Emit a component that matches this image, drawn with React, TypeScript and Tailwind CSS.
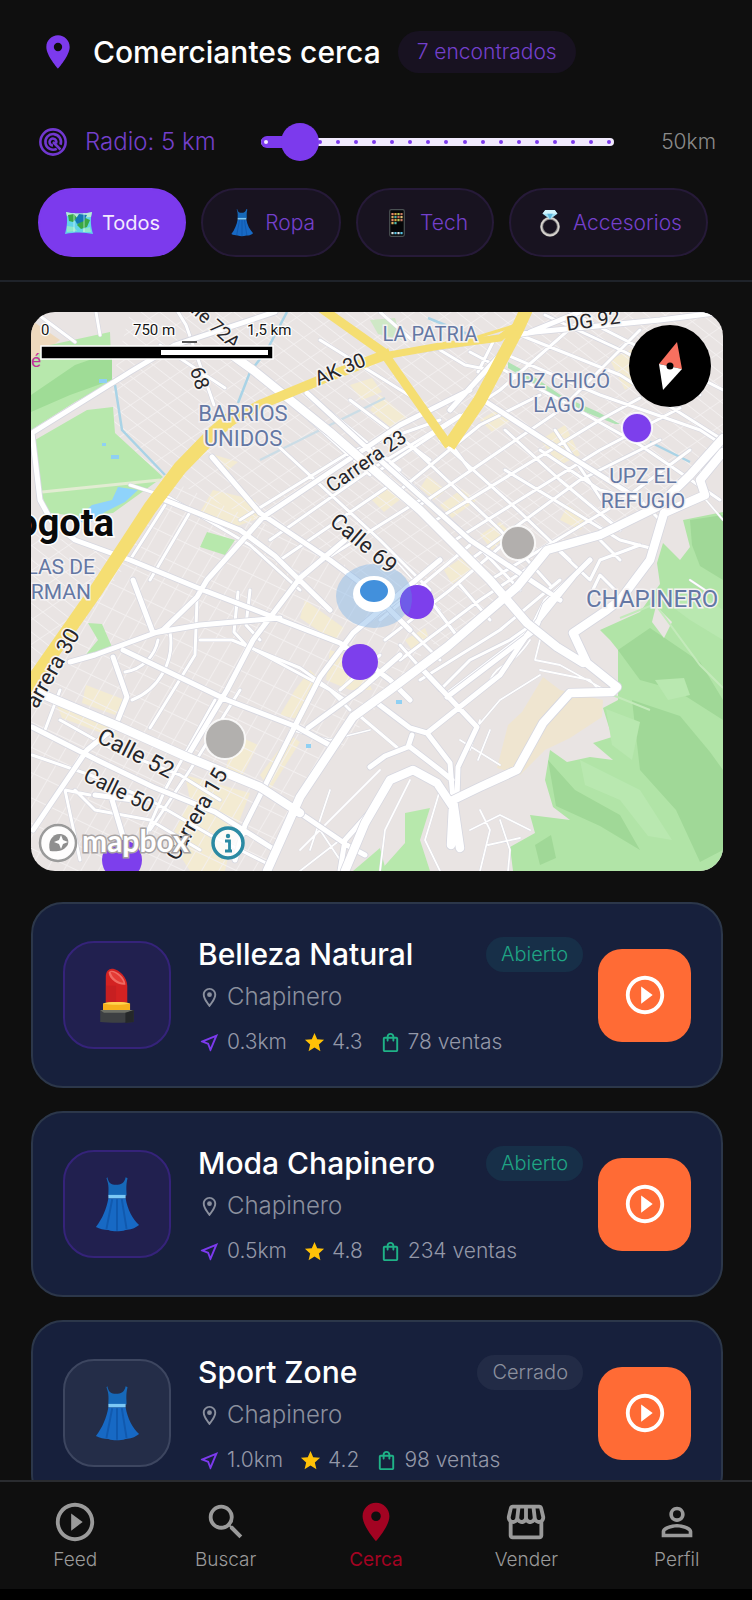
import React, { useState } from "react";
import {
  MdLocationOn,
  MdOutlineLocationOn,
  MdOutlineNearMe,
  MdOutlineShoppingBag,
  MdPersonOutline,
  MdPlayCircleOutline,
  MdSearch,
  MdStar,
  MdOutlineStorefront,
} from "react-icons/md";

/* ---------- Illustrations ---------- */

function Dress({ className }: { className: string }) {
  return (
    <svg viewBox="0 0 48 60" className={className} aria-hidden="true">
      <path d="M14 2c1 6 4 8 9 8s9-2 10-8l2 1c-2 8-1 13-1 18H15c0-6 1-10-2-18z" fill="#1668b8" />
      <path d="M15 24h18c2 12 7 21 14 28-5 4-9 5-14 5-6 2-13 2-18 0-5 0-9-1-13-3C9 45 13 35 15 24z" fill="#1769c4" />
      <path d="M19 25l-6 31M24 25v33M29 25l5 31" stroke="#1159ae" strokeWidth="2" fill="none" />
      <path d="M15 20.500h18v3.500H15z" fill="#7cc8f5" />
    </svg>
  );
}

function Lipstick({ className }: { className: string }) {
  return (
    <svg viewBox="0 0 36 60" className={className} aria-hidden="true">
      <path d="M6 38V10C6 4 10 1 14 2c6 1 15 9 15 18v18z" fill="#d32222" />
      <path d="M6 20v18h11V20z" fill="#b71b20" opacity=".4" />
      <path d="M9 6c3-6 18 3 18 13-6 1-17-4-18-13z" fill="#ef6a62" />
      <path d="M11 5c4 0 12 5 14 12-6-1-12-5-14-12z" fill="#e43b35" />
      <path d="M3 39c8-2 21-2 29 0v9H3z" fill="#f6b01c" />
      <path d="M3 39c8-2 21-2 29 0-8 2-21 2-29 0z" fill="#ffd34e" />
      <path d="M0 46h36v13c-9 1-27 1-36 0z" fill="#3d4043" />
      <path d="M0 46h36l-7 3H4z" fill="#6d6f66" />
      <path d="M27 49l9-3v13l-9 1z" fill="#25282a" />
    </svg>
  );
}

function MapEmoji({ className }: { className: string }) {
  return (
    <svg viewBox="0 0 30 26" className={className} aria-hidden="true">
      <path d="M2 2c9 2 17 2 26 0-2 8-1 15 1 22-9-2-18-2-28 0C3 17 4 9 2 2z" fill="#63d3ea" />
      <path d="M2 2c9 2 17 2 26 0l-1 5c-8 1-16 0-24-1z" fill="#b7ead5" />
      <path d="M4 5l6-1 3 4-4 4-4-1zM13 15l6-8 7 3-3 7-6 2z" fill="#3aa845" />
      <path d="M15 4l8 1-3 6-7 3-2-4z" fill="#1477b5" />
      <path d="M3 16l7 1 3 4-10 1zM19 19l7-2 1 5h-8z" fill="#8ee8c9" />
      <path d="M10 3v19M20 3v19" stroke="#e3fbff" strokeWidth="1" opacity=".6" />
    </svg>
  );
}

function PhoneEmoji({ className }: { className: string }) {
  const colors = ["#e8896a", "#d9a441", "#b8c95a", "#c77b63", "#e0b060", "#4fb8a8", "#d0705a", "#e6c179"];
  return (
    <svg viewBox="0 0 16 28" className={className} aria-hidden="true">
      <rect x=".7" y=".7" width="14.600" height="26.600" rx="1.500" fill="#050608" stroke="#4a5153" strokeWidth="1.200" />
      {Array.from({ length: 14 }, (_, i) => (
        <rect key={i} x={2.4 + (i % 4) * 3} y={4 + Math.floor(i / 4) * 3} width="2.200" height="2.200" rx=".5" fill={colors[i % 8]} />
      ))}
      {[0, 1, 2, 3].map((i) => (
        <rect key={i} x={2.4 + i * 3} y="23" width="2.200" height="2.200" rx=".5" fill={i % 2 ? "#58c6e8" : "#d8e8ea"} />
      ))}
    </svg>
  );
}

function RingEmoji({ className }: { className: string }) {
  return (
    <svg viewBox="0 0 24 30" className={className} aria-hidden="true">
      <circle cx="12" cy="19" r="9" fill="none" stroke="#8b8b8b" strokeWidth="3.200" />
      <circle cx="12" cy="19" r="9.300" fill="none" stroke="#d8d4cf" strokeWidth="1.700" />
      <path d="M7 1h10l3 4-8 6-8-6z" fill="#9fe0f5" />
      <path d="M7 1h10l3 4H4z" fill="#d3f5fd" />
      <path d="M9 5l3 6 3-6z" fill="#5fb7dd" />
    </svg>
  );
}

function Radar({ className }: { className: string }) {
  return (
    <svg viewBox="0 0 28 28" className={className} fill="none" stroke="currentColor" strokeWidth="2.400" aria-hidden="true">
      <circle cx="14" cy="14" r="11.800" />
      <path d="M17.500 20.400A7.300 7.300 0 1 1 21 16.500" />
      <path d="M14 14l7 7M14 17.200a3.200 3.200 0 1 1 3-2.200" />
    </svg>
  );
}

/* ---------- Map ---------- */

const parks = [
  "M31 360L50 345L110 332L112 382L75 402L31 430Z",
  "M35 440L87 410L113 407L115 433L163 477L113 513L80 516L47 513L40 487Z",
  "M207 532L235 540L225 555L200 547Z",
  "M88 623L102 624L112 647L83 658L98 640Z",
  "M405 813L430 808L420 840L430 871L380 871L405 843Z",
  "M353 871L380 848L386 871Z",
];

const forest =
  "M683 520L690 547L680 560L663 543L657 563L660 584L640 612L600 630L610 640L618 650L618 700L603 708L612 737L593 743L613 760L590 757L567 762L550 750L545 780L553 807L570 820L530 815L535 833L510 847L513 871L723 871L723 512Z";

const forestShades = [
  "M690 520L723 515L723 580L700 566L692 545Z",
  "M618 650L650 628L700 662L723 700L723 720L676 690L640 680Z",
  "M632 700L680 716L710 752L723 770L723 850L700 862L676 810L640 770Z",
  "M548 760L575 790L620 815L640 850L600 826L556 806Z",
  "M535 845L551 835L556 858L540 865Z",
];

const forestLights = [
  "M663 600L700 592L723 610L723 640L690 620Z",
  "M606 709L640 722L632 760L612 745Z",
  "M580 760L640 790L672 840L648 836L620 800L585 785Z",
  "M655 680L684 678L690 695L668 700Z",
];

const blocks = [
  "M213 490L255 500L262 517L232 528L200 512Z",
  "M215 455L238 462L228 470Z",
  "M350 385L372 378L382 392L362 400Z",
  "M380 395L410 420L396 432L370 410Z",
  "M440 505L462 489L477 500L452 518Z",
  "M428 476L446 490L434 500L420 488Z",
  "M372 500L392 486L402 498L384 512Z",
  "M305 600L344 628L335 642L300 618Z",
  "M295 690L310 670L320 680L302 720L280 715Z",
  "M330 650L360 660L372 690L350 690L326 680Z",
  "M260 775L290 735L300 742L270 790Z",
  "M185 775L250 793L232 840L225 871L190 871L170 840L190 800Z",
  "M86 685L125 700L115 715L82 703Z",
  "M55 700L110 722L120 740L62 718Z",
  "M480 535L500 522L510 532L492 550Z",
  "M568 505L590 520L580 530L560 520Z",
  "M610 360L650 340L655 370L625 390Z",
  "M540 440L565 425L580 455L560 465Z",
  "M444 570L470 552L480 565L452 584Z",
  "M480 420L500 408L512 420L492 432Z",
  "M236 735L258 745L240 780L225 770Z",
  "M405 640L425 628L430 640L412 650Z",
];

const minorRoads = [
  "M40 316L75 342", "M178 312L186 325L214 405", "M96 312L100 335", "M320 340L420 402L470 470",
  "M130 485L170 498L250 545L300 590", "M165 505L130 560", "M190 512L150 580", "M160 345L225 388",
  "M470 352L560 400L640 445L720 500", "M500 352L600 395L700 430L723 445", "M520 335L620 375L723 440",
  "M545 315L625 352L700 395", "M570 312L723 390", "M412 340L380 312", "M478 372L494 340", "M440 350L465 365L500 372",
  "M380 470L440 430L500 390L580 320", "M400 490L480 425L540 395", "M420 505L560 410L640 330",
  "M436 520L600 420L640 398", "M455 540L600 450L680 408", "M470 560L580 480L660 440", "M490 580L620 502L690 450",
  "M505 470L620 540L650 548", "M540 450L600 490L640 500L660 520", "M555 430L605 505", "M505 430L560 480L620 530",
  "M440 440L520 512L570 560", "M415 450L500 530L550 585", "M390 465L480 548L520 590",
  "M600 540L620 560M560 552L590 580L600 560L640 545M588 600L600 575L615 590",
  "M270 540L370 470L460 415", "M280 560L390 485", "M300 575L420 500", "M240 520L350 452L440 420",
  "M330 412L400 470", "M350 400L430 460", "M310 420L370 475", "M277 445L380 540L430 590",
  "M238 592L234 632L246 645L330 690L350 710", "M250 590L246 625L260 640",
  "M170 632A62 62 0 0 1 132 700", "M158 640A40 40 0 0 1 125 672", "M200 640L232 640L300 668L345 700",
  "M197 600L195 655L150 728", "M240 690L190 770L150 830", "M215 700L165 790L130 871",
  "M60 720L110 748L180 775L220 800", "M32 755L90 775L150 800L210 835L270 865", "M75 790L95 810L150 820L200 850",
  "M60 690L45 730", "M90 795L65 790L80 860", "M385 640L450 590L520 530", "M380 620L470 545", "M400 660L480 600L540 560",
  "M400 645L440 690L470 660L510 640L527 628", "M420 680L500 630L560 580", "M445 695L530 630L545 600L590 560",
  "M390 610L440 660", "M430 600L460 640", "M460 585L490 620", "M340 690L380 655", "M355 712L400 750",
];

const lanes = [
  "M490 680C500 660 510 670 530 640", "M540 640L535 660L560 665L605 690", "M540 670L590 680L603 695", "M460 740L500 765",
  "M480 720L470 750M490 730L478 760", "M477 727L500 700L540 675", "M410 780L385 830L380 871", "M440 790L425 840L440 871",
  "M480 810L490 830L480 871M500 820L510 850L508 871M470 830L500 815L530 830M488 845L520 838",
  "M290 730L330 740L370 730", "M300 850L350 800L380 770", "M330 790L310 850", "M340 840L300 871M320 830L340 860",
  "M395 560L440 610", "M345 640L400 600", "M700 470L706 500L723 520M690 580L705 590",
];

const mediumRoads = [
  "M32 433L130 372L175 345L275 312", "M32 433L40 500L52 522L75 540L130 560L203 590L273 617L340 643L390 680L410 700",
  "M133 580L153 633", "M70 662L95 655L163 630L197 597L207 580L263 517L293 497L400 425L470 390",
  "M153 633L200 625L280 618", "M113 657L127 697L115 727L87 750L33 830",
  "M123 650L227 700L297 727L333 747", "M187 757L227 690L253 640L300 578L345 540",
  "M212 457L260 513L330 560L370 590L410 630", "M165 500L240 530L275 556L330 610",
  "M32 727L97 760L153 787L215 812L275 850", "M235 860L245 825L293 730L320 677L353 633L410 585L440 560",
  "M308 728L360 690L400 655", "M300 813L350 847L365 855", "M307 393L380 460L470 540L560 600",
  "M423 670L477 727L458 767L457 800", "M377 703L410 728L427 733L450 763L453 800",
  "M370 767L385 756L408 747L412 735M410 747L440 770L452 780", "M427 733L500 675L527 635L575 575L590 560",
  "M447 697L535 630L545 605L580 570", "M140 800L110 793L130 860M133 800L95 795",
  "M370 812L345 840L340 871", "M500 355L450 410", "M483 400L560 450L640 500", "M580 312L560 320L530 332", "M723 312L660 320L535 332L420 350",
];

const majorRoads = [
  "M232 355L253 370L330 432L420 510L490 580L527 623L557 647L583 663",
  "M267 871L300 797L353 717L390 690L447 647L517 587L547 550L600 535L657 507L690 475L723 438",
  "M32 690L120 727L187 757L260 787L300 813",
  "M723 452L700 480L705 495L664 513L650 560L620 600L607 610L573 633L587 663L617 687L612 692L570 693L543 723L517 770L480 787L453 800L460 848",
  "M345 871L365 823L390 780L413 770L437 783L453 807L451 845",
];

function DistrictLabel({ x, y, size = 20, anchor = "middle", children }: { x: number; y: number; size?: number; anchor?: "start" | "middle" | "end"; children: string }) {
  return (
    <text x={x} y={y} fontSize={size} textAnchor={anchor} fill="#6478a4" stroke="#f4f1f2" strokeWidth="3" paintOrder="stroke">
      {children}
    </text>
  );
}

function RoadLabel({ x, y, angle, size = 20, children }: { x: number; y: number; angle: number; size?: number; children: string }) {
  return (
    <text transform={`translate(${x} ${y}) rotate(${angle})`} dy=".35em" fontSize={size} textAnchor="middle" fill="#26262a" stroke="#f7f5f3" strokeWidth="3" paintOrder="stroke">
      {children}
    </text>
  );
}

function Roads({ paths, width, casing = 1.6 }: { paths: string[]; width: number; casing?: number }) {
  return (
    <g fill="none" strokeLinejoin="round" strokeLinecap="round">
      <path d={paths.join("")} stroke="#d6d7e0" strokeWidth={width + casing} />
      <path d={paths.join("")} stroke="#ffffff" strokeWidth={width} />
    </g>
  );
}

function Pin({ x, y, r, color }: { x: number; y: number; r: number; color: string }) {
  return <circle cx={x} cy={y} r={r} fill={color} stroke="#ffffff" strokeOpacity=".85" strokeWidth="2" />;
}

function CityMap() {
  return (
    <svg viewBox="31 312 692 559" className="block w-full rounded-[24px] font-['Roboto',sans-serif]" role="img" aria-label="Mapa de Bogotá">
      <defs>
        <pattern id="gridA" width="22" height="12" patternUnits="userSpaceOnUse" patternTransform="matrix(.77 .6 .83 -.56 0 0)">
          <path d="M0 0H22M0 0V12" stroke="#f3f0f0" strokeWidth="1.800" />
        </pattern>
        <pattern id="gridB" width="15" height="23" patternUnits="userSpaceOnUse" patternTransform="matrix(.9 .43 .5 -.86 0 0)">
          <path d="M0 0H15M0 0V23" stroke="#f3f0f0" strokeWidth="1.800" />
        </pattern>
      </defs>
      <rect x="31" y="312" width="692" height="559" fill="#e9e4e3" />
      {blocks.map((d) => (
        <path key={d} d={d} fill="#f3ebd2" />
      ))}
      <path d="M130 312H723V440L650 512L540 560L440 650L340 560L163 477L115 433L112 382Z" fill="url(#gridA)" />
      <path d="M95 592L163 477L340 560L430 645L300 797L267 871H31V690Z" fill="url(#gridB)" />
      <path d="M31 530L130 560L70 640L31 690Z" fill="url(#gridA)" />
      <path d="M31 320L60 340L31 362Z" fill="#eed9bd" />
      {parks.map((d) => (
        <path key={d} d={d} fill="#b7e8ac" />
      ))}
      <path d="M31 395L75 365L112 352L112 380L70 395L31 412Z" fill="#9fdc96" />
      <path d="M370 320L395 318L402 340L378 334Z" fill="#cfe8c6" />
      <path d="M508 362L530 374L562 396L598 412L620 424L615 424L580 410L545 390L508 368Z" fill="#b0e3b4" />
      <path d="M497 768L508 725L522 712L543 677L560 690L603 700L602 717L570 738L545 750L520 775Z" fill="#efe5d0" />
      <path d="M118 487L138 490L125 502L105 512L88 524L75 520L92 505L112 500Z" fill="#8fd3fb" />
      <path d="M99 379h8v4h-8zM111 455h8v4h-8zM102 443h4v3h-4zM396 700h6v4h-6zM306 744h5v4h-5z" fill="#8fd0f3" />
      <path d="M115 385L122 430L165 475M287 312L267 350L250 372L238 403M428 318L470 335M650 442L690 462" fill="none" stroke="#a9d3e6" strokeWidth="2.500" />
      <path d="M260 460L330 425L385 398" fill="none" stroke="#cbdde6" strokeWidth="2.500" />
      <path d={forest} fill="#b1e4a7" />
      {forestShades.map((d) => (
        <path key={d} d={d} fill="#a0d897" />
      ))}
      {forestLights.map((d) => (
        <path key={d} d={d} fill="#b9e8b0" />
      ))}
      <path d="M656 606L672 622L664 638L652 622Z" fill="#e9e4e3" />
      <path d="M620 618L655 604L700 665L723 688M600 690L650 710" fill="none" stroke="#c3eaba" strokeWidth="2" />
      <path d="M42 492L160 480" stroke="#e2ecd2" strokeWidth="3" />

      <Roads paths={lanes} width={1.8} casing={0.6} />
      <Roads paths={minorRoads} width={3} casing={1.2} />
      <Roads paths={mediumRoads} width={5} />
      <Roads paths={majorRoads} width={8.5} />

      <g fill="none" stroke="#f5de72" strokeLinejoin="round">
        <path d="M390 353L330 376L262 404L232 420L215 432" strokeWidth="10" />
        <path d="M236 414L215 432L180 468L150 508L95 592L25 692" strokeWidth="14" />
        <path d="M318 306L383 352L449 446" strokeWidth="9" />
        <path d="M449 446L480 400L517 330L528 306" strokeWidth="13" />
        <path d="M378 357L440 346L500 338L516 326" strokeWidth="7" />
        <path d="M468 340L520 324" strokeWidth="3" />
      </g>

      <ellipse cx="374" cy="596" rx="38" ry="32" fill="#8dbbea" fillOpacity=".5" />
      <ellipse cx="374" cy="594" rx="21" ry="18" fill="#ffffff" />
      <ellipse cx="374" cy="591" rx="14" ry="11" fill="#4290dc" />

      <RoadLabel x={216} y={326} angle={42} size={19}>lle 72A</RoadLabel>
      <RoadLabel x={200} y={378} angle={72} size={20}>68</RoadLabel>
      <RoadLabel x={340} y={369} angle={-23} size={20}>AK 30</RoadLabel>
      <RoadLabel x={593} y={320} angle={-8} size={20}>DG 92</RoadLabel>
      <RoadLabel x={366} y={461} angle={-35} size={20}>Carrera 23</RoadLabel>
      <RoadLabel x={364} y={543} angle={40} size={22}>Calle 69</RoadLabel>
      <RoadLabel x={136} y={753} angle={27} size={23}>Calle 52</RoadLabel>
      <RoadLabel x={119} y={790} angle={26} size={21}>Calle 50</RoadLabel>
      <RoadLabel x={196} y={814} angle={-60} size={22}>Carrera 15</RoadLabel>
      <RoadLabel x={52} y={668} angle={-60} size={22}>arrera 30</RoadLabel>

      <DistrictLabel x={243} y={421} size={22}>BARRIOS</DistrictLabel>
      <DistrictLabel x={243} y={446} size={22}>UNIDOS</DistrictLabel>
      <DistrictLabel x={430} y={341} size={20}>LA PATRIA</DistrictLabel>
      <DistrictLabel x={559} y={388}>UPZ CHICÓ</DistrictLabel>
      <DistrictLabel x={559} y={412}>LAGO</DistrictLabel>
      <DistrictLabel x={643} y={483} size={21}>UPZ EL</DistrictLabel>
      <DistrictLabel x={643} y={508} size={21}>REFUGIO</DistrictLabel>
      <DistrictLabel x={586} y={607} size={24} anchor="start">CHAPINERO</DistrictLabel>
      <DistrictLabel x={95} y={574} size={21} anchor="end">LAS DE</DistrictLabel>
      <DistrictLabel x={91} y={599} size={21} anchor="end">RMAN</DistrictLabel>
      <text x="114" y="536" fontSize="38" fontWeight="700" textAnchor="end" fill="#0a0a0a" stroke="#ffffff" strokeWidth="3" paintOrder="stroke">ogota</text>
      <text x="31" y="367" fontSize="19" fill="#c2359b">é</text>

      <Pin x={637} y={428} r={15} color="#7d3fec" />
      <Pin x={518} y={543} r={17} color="#b2afad" />
      <circle cx="417" cy="602" r="17" fill="#7d3fec" />
      <path d="M402 594a17 17 0 0 1 8-7q5 14-2 28a17 17 0 0 1-6-21z" fill="#6f5ce8" />
      <circle cx="360" cy="662" r="18" fill="#7d3fec" />
      <Pin x={225} y={739} r={20} color="#b2b0ae" />
      <circle cx="122" cy="860" r="20" fill="#7d3fec" />

      <g fontSize="15" fill="#151515" stroke="#ffffff" strokeWidth="2.500" paintOrder="stroke">
        <text x="41" y="335">0</text>
        <text x="133" y="335">750 m</text>
        <text x="247" y="335">1,5 km</text>
      </g>
      <rect x="41" y="346" width="232" height="13" fill="#000000" stroke="#ffffff" strokeWidth="1.500" />
      <rect x="161" y="350" width="107" height="5" fill="#ffffff" />
      <path d="M182 342h15" stroke="#222222" strokeWidth="1.500" />

      <circle cx="670" cy="366" r="41" fill="#000000" />
      <path d="M677 342L682 369L659 364Z" fill="#f8705f" />
      <path d="M659 364L682 369L663 390Z" fill="#ffffff" />
      <circle cx="670" cy="366" r="3.500" fill="#000000" />

      <circle cx="58" cy="843" r="18" fill="#ffffff" fillOpacity=".92" stroke="#9a9a9a" strokeWidth="2.500" />
      <path d="M50 851c-3-10 3-18 11-17 7 1 9 8 6 12-4 5-10 6-17 5z" fill="#8f8f8f" />
      <path d="M61 835l2 5 5 2-5 2-2 5-2-5-5-2 5-2z" fill="#ffffff" />
      <text x="82" y="852" fontSize="30" fontWeight="700" className="font-['Lato',sans-serif]" fill="#ffffff" stroke="#a7a3a3" strokeWidth="3" paintOrder="stroke">mapbox</text>
      <circle cx="228" cy="843" r="15" fill="#ffffff" fillOpacity=".8" stroke="#2b8aa3" strokeWidth="3.500" />
      <circle cx="228" cy="836" r="2.200" fill="#2b8aa3" />
      <path d="M225 841h4.500v9M225 851h7" stroke="#2b8aa3" strokeWidth="2.800" fill="none" />
    </svg>
  );
}

/* ---------- Header ---------- */

const filters = [
  { label: "Todos", icon: <MapEmoji className="h-[26px] w-[30px]" /> },
  { label: "Ropa", icon: <Dress className="h-[29px] w-[30px]" /> },
  { label: "Tech", icon: <PhoneEmoji className="h-[28px] w-[30px]" /> },
  { label: "Accesorios", icon: <RingEmoji className="h-[28px] w-[30px]" /> },
];

function RadiusSlider({ value, onChange }: { value: number; onChange: (v: number) => void }) {
  return (
    <div className="relative flex h-[38px] flex-1 items-center">
      <div className="flex h-[8px] w-full items-center justify-between rounded-full bg-[#f1eafd] px-[3px]">
        {Array.from({ length: 20 }, (_, i) => (
          <span key={i} className="size-[4px] rounded-full bg-[#7c3aed]" />
        ))}
      </div>
      <div className="absolute left-0 flex h-[12px] items-center rounded-full bg-[#7c3aed] pl-[3px]" style={{ width: `${(value / 50) * 100}%` }}>
        <span className="size-[4px] rounded-full bg-[#f1eafd]" />
      </div>
      <input
        id="radio"
        type="range"
        min={0}
        max={50}
        value={value}
        onChange={(e) => onChange(Number(e.target.value))}
        className="absolute -inset-x-[14px] m-0 h-[38px] cursor-pointer appearance-none bg-transparent [&::-webkit-slider-thumb]:size-[38px] [&::-webkit-slider-thumb]:appearance-none [&::-webkit-slider-thumb]:rounded-full [&::-webkit-slider-thumb]:bg-[#7c3aed]"
      />
    </div>
  );
}

function Header() {
  const [radius, setRadius] = useState(5);
  const [active, setActive] = useState("Todos");
  return (
    <header className="shrink-0 border-b-2 border-[#1f232a] px-[38px] pt-[31px] pb-[23px]">
      <div className="flex items-center">
        <MdLocationOn className="size-[40px] text-[#7c3aed]" />
        <h1 className="ml-[15px] text-[30px] leading-[42px] font-medium text-white">Comerciantes cerca</h1>
        <span className="ml-[17px] rounded-full bg-[#181221] px-[19px] text-[21px] leading-[42px] font-light text-[#7440cb]">7 encontrados</span>
      </div>
      <div className="mt-[50px] flex items-center">
        <Radar className="size-[30px] text-[#7138d0]" />
        <label htmlFor="radio" className="ml-[17px] w-[176px] text-[24px] leading-[38px] font-light text-[#7440cb]">
          Radio: {radius} km
        </label>
        <RadiusSlider value={radius} onChange={setRadius} />
        <span className="-mr-[2px] w-[102px] text-right text-[21px] leading-[38px] font-light text-[#8b8b8b]">50km</span>
      </div>
      <div className="mt-[27px] flex gap-[15px]">
        {filters.map(({ label, icon }) => (
          <button
            key={label}
            type="button"
            aria-pressed={active === label}
            onClick={() => setActive(label)}
            className={
              active === label
                ? "flex h-[69px] items-center gap-[8px] rounded-full border-2 border-[#7c3aed] bg-[#7c3aed] px-[24px] text-[20px] text-[#f3eafe]"
                : "flex h-[69px] items-center gap-[8px] rounded-full border-2 border-[#261a38] bg-[#181320] px-[24px] text-[21px] font-light text-[#7440cb]"
            }
          >
            {icon}
            {label}
          </button>
        ))}
      </div>
    </header>
  );
}

/* ---------- Shops ---------- */

interface Shop {
  name: string;
  place: string;
  distance: string;
  rating: string;
  sales: string;
  open: boolean;
  icon: React.ReactNode;
}

const shops: Shop[] = [
  { name: "Belleza Natural", place: "Chapinero", distance: "0.3km", rating: "4.3", sales: "78 ventas", open: true, icon: <Lipstick className="h-[56px] w-[34px]" /> },
  { name: "Moda Chapinero", place: "Chapinero", distance: "0.5km", rating: "4.8", sales: "234 ventas", open: true, icon: <Dress className="h-[58px] w-[46px]" /> },
  { name: "Sport Zone", place: "Chapinero", distance: "1.0km", rating: "4.2", sales: "98 ventas", open: false, icon: <Dress className="h-[58px] w-[46px]" /> },
];

function ShopCard({ shop }: { shop: Shop }) {
  return (
    <article className="flex shrink-0 items-center rounded-[32px] border-2 border-[#2c374a] bg-[#17203c] px-[30px] py-[32px]">
      <div
        className={
          shop.open
            ? "flex size-[108px] shrink-0 items-center justify-center rounded-[31px] border-2 border-[#35237a] bg-[#21204f]"
            : "flex size-[108px] shrink-0 items-center justify-center rounded-[31px] border-2 border-[#3d4660] bg-[#242d48]"
        }
      >
        {shop.icon}
      </div>
      <div className="ml-[27px] min-w-0 flex-1">
        <div className="flex items-center justify-between">
          <h2 className="text-[30px] leading-[36px] font-medium text-white">{shop.name}</h2>
          <span
            className={
              shop.open
                ? "rounded-full bg-[#172f48] px-[15px] text-[20px] leading-[35px] font-light text-[#1fa584]"
                : "rounded-full bg-[#222b46] px-[15px] text-[20px] leading-[35px] font-light text-[#8b909e]"
            }
          >
            {shop.open ? "Abierto" : "Cerrado"}
          </span>
        </div>
        <p className="mt-[9px] flex items-center gap-[6px] text-[24px] leading-[32px] font-light text-[#8b909e]">
          <MdOutlineLocationOn className="size-[23px]" />
          {shop.place}
        </p>
        <div className="mt-[17px] flex items-center gap-[16px] text-[21px] leading-[24px] font-light text-[#9498a8]">
          <span className="flex items-center gap-[6px]">
            <MdOutlineNearMe className="size-[23px] text-[#7c3aed]" />
            {shop.distance}
          </span>
          <span className="flex items-center gap-[6px]">
            <MdStar className="size-[23px] text-[#ffc107]" />
            {shop.rating}
          </span>
          <span className="flex items-center gap-[6px]">
            <MdOutlineShoppingBag className="size-[23px] text-[#1fb287]" />
            {shop.sales}
          </span>
        </div>
      </div>
      <button type="button" aria-label={`Ver ${shop.name}`} className="ml-[15px] flex size-[93px] shrink-0 items-center justify-center rounded-[24px] bg-[#ff6b35] text-white">
        <MdPlayCircleOutline className="size-[46px]" />
      </button>
    </article>
  );
}

/* ---------- Bottom navigation ---------- */

const tabs = [
  { label: "Feed", Icon: MdPlayCircleOutline },
  { label: "Buscar", Icon: MdSearch },
  { label: "Cerca", Icon: MdLocationOn },
  { label: "Vender", Icon: MdOutlineStorefront },
  { label: "Perfil", Icon: MdPersonOutline },
];

function BottomNav() {
  return (
    <nav className="shrink-0 border-t-2 border-[#2a2c30] border-b-[11px] border-b-black bg-[#0f0f0f]">
      <ul className="grid grid-cols-5">
        {tabs.map(({ label, Icon }) => (
          <li key={label}>
            <a
              href={`#${label.toLowerCase()}`}
              className={
                label === "Cerca"
                  ? "flex flex-col items-center pt-[17px] pb-[17px] text-[19px] leading-[24px] text-[#a30322]"
                  : "flex flex-col items-center pt-[17px] pb-[17px] text-[19px] leading-[24px] font-light text-[#9a9a9a]"
              }
            >
              <Icon className="mb-[3px] size-[46px]" />
              {label}
            </a>
          </li>
        ))}
      </ul>
    </nav>
  );
}

export default function App() {
  return (
    <div className="flex h-screen flex-col bg-[#0f0f0f] font-['Inter',sans-serif]">
      <Header />
      <main className="flex min-h-0 flex-1 flex-col gap-[23px] overflow-y-auto pt-[30px] pr-[29px] pl-[31px] [scrollbar-width:none]">
        <section className="mb-[8px] shrink-0">
          <CityMap />
        </section>
        {shops.map((shop) => (
          <ShopCard key={shop.name} shop={shop} />
        ))}
      </main>
      <BottomNav />
    </div>
  );
}
